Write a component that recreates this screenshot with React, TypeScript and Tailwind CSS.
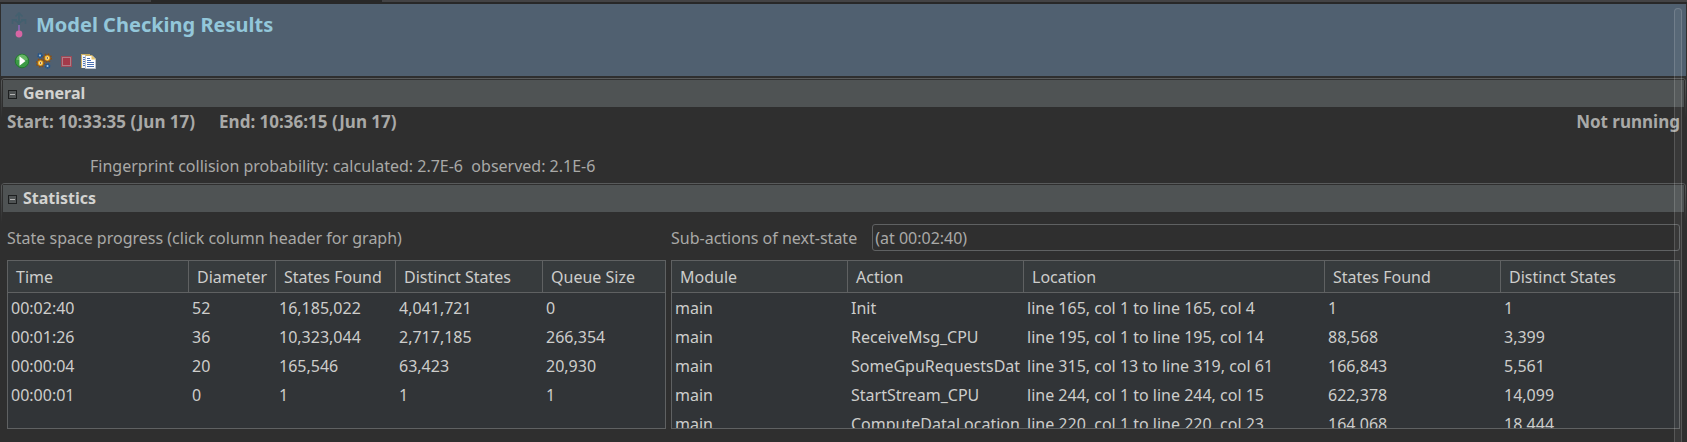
import React from "react";

type Column = { label: string; width: string };

const progressColumns: Column[] = [
  { label: "Time", width: "w-[181px]" },
  { label: "Diameter", width: "w-[87px]" },
  { label: "States Found", width: "w-[120px]" },
  { label: "Distinct States", width: "w-[147px]" },
  { label: "Queue Size", width: "w-auto" },
];

const progressRows = [
  ["00:02:40", "52", "16,185,022", "4,041,721", "0"],
  ["00:01:26", "36", "10,323,044", "2,717,185", "266,354"],
  ["00:00:04", "20", "165,546", "63,423", "20,930"],
  ["00:00:01", "0", "1", "1", "1"],
];

const actionColumns: Column[] = [
  { label: "Module", width: "w-[176px]" },
  { label: "Action", width: "w-[176px]" },
  { label: "Location", width: "w-[301px]" },
  { label: "States Found", width: "w-[176px]" },
  { label: "Distinct States", width: "w-auto" },
];

const actionRows = [
  ["main", "Init", "line 165, col 1 to line 165, col 4", "1", "1"],
  ["main", "ReceiveMsg_CPU", "line 195, col 1 to line 195, col 14", "88,568", "3,399"],
  ["main", "SomeGpuRequestsDat", "line 315, col 13 to line 319, col 61", "166,843", "5,561"],
  ["main", "StartStream_CPU", "line 244, col 1 to line 244, col 15", "622,378", "14,099"],
  ["main", "ComputeDataLocation", "line 220, col 1 to line 220, col 23", "164,068", "18,444"],
];

function DataTable({ label, columns, rows }: { label: string; columns: Column[]; rows: string[][] }) {
  return (
    <div className="min-h-0 flex-1 overflow-hidden border border-[#5f6162] bg-[#313437]">
      <table
        aria-label={label}
        className="w-full table-fixed border-separate border-spacing-0 text-left text-[#cdcdcb]"
      >
        <thead>
          <tr className="h-8 bg-[#373b3d]">
            {columns.map((c) => (
              <th
                key={c.label}
                className={`${c.width} border-r border-b border-[#5f6162] p-0 font-normal last:border-r-0`}
              >
                <button type="button" className="block w-full truncate pl-2 text-left leading-6">
                  {c.label}
                </button>
              </th>
            ))}
          </tr>
        </thead>
        <tbody>
          {rows.map((row) => (
            <tr key={row.join()} className="h-[29px]">
              {row.map((cell, i) => (
                <td key={i} className="overflow-hidden p-0 pl-[3px] leading-6 whitespace-nowrap">
                  <div className="overflow-hidden">{cell}</div>
                </td>
              ))}
            </tr>
          ))}
        </tbody>
      </table>
    </div>
  );
}

function Section({ title, className, children }: { title: string; className: string; children: React.ReactNode }) {
  return (
    <section className={`rounded-t-sm bg-[linear-gradient(#595b5c,#2f2f2f_40px)] px-px pt-px ${className}`}>
      <div className="flex min-h-0 flex-1 flex-col rounded-t-xs bg-[#2f2f2f] pt-px">
        <h2 className="mx-px h-[27px] shrink-0 bg-[#4f5354] font-bold text-[#d3d3d1]">
          <button type="button" className="flex h-full w-full items-center gap-[6px] pb-[2px] pl-[5px] text-left">
            <svg aria-hidden="true" viewBox="0 0 9 9" className="mt-1 size-[9px]" shapeRendering="crispEdges">
              <rect x="0.5" y="0.5" width="8" height="8" fill="none" stroke="#1d1f20" />
              <rect x="2" y="4" width="5" height="1" fill="#b5b5b5" />
            </svg>
            {title}
          </button>
        </h2>
        {children}
      </div>
    </section>
  );
}

function ModelIcon() {
  return (
    <svg aria-hidden="true" viewBox="0 0 16 26" className="h-[26px] w-4" fill="none">
      <path
        d="M8 14V1.500M4.500 4.500 8 1l3.500 3.500M8 14C8 11 5.500 8.500 1.500 8M1.500 12V7.700H6M8 14c0-3 2.500-5.500 6.500-6M14.500 12V7.700H10"
        stroke="#43606f"
        strokeWidth="1.600"
      />
      <path d="M8 13v7" stroke="#8066a8" strokeWidth="2" />
      <circle cx="8" cy="22" r="3.400" fill="#d765a3" />
    </svg>
  );
}

function RunIcon() {
  return (
    <svg aria-hidden="true" viewBox="0 0 16 16" className="size-4">
      <circle cx="8" cy="8" r="6.800" fill="#3c9a45" stroke="#21782f" />
      <path d="M2.500 7a5.500 5.500 0 0 1 11 0Z" fill="#67b565" />
      <path d="M5.500 3.300v9.400L11.500 8Z" fill="#fff" />
    </svg>
  );
}

function Gear({ cx, cy }: { cx: number; cy: number }) {
  return (
    <g>
      <circle cx={cx} cy={cy} r="3.900" stroke="#8a4f12" strokeWidth="1.600" strokeDasharray="1.530 1.530" />
      <circle cx={cx} cy={cy} r="3.100" fill="#f7b92e" stroke="#8a4f12" strokeWidth="0.700" />
      <circle cx={cx} cy={cy} r="1.500" fill="#fff4d0" />
      <circle cx={cx} cy={cy} r="0.800" fill="#4a2c10" />
    </g>
  );
}

function GearsIcon() {
  return (
    <svg aria-hidden="true" viewBox="0 0 16 16" className="size-4 overflow-visible" fill="none">
      <circle cx="4" cy="2.500" r="2" stroke="#1b5494" strokeWidth="1.600" strokeDasharray="1.500 0.600" />
      <circle cx="4" cy="2.500" r="1" fill="#9ccbf0" />
      <circle cx="11.500" cy="13" r="2" stroke="#1b5494" strokeWidth="1.600" strokeDasharray="1.500 0.600" />
      <circle cx="11.500" cy="13" r="1" fill="#9ccbf0" />
      <Gear cx={11.3} cy={5} />
      <Gear cx={4.5} cy={10} />
    </svg>
  );
}

function StopIcon() {
  return (
    <svg aria-hidden="true" viewBox="0 0 16 16" className="size-4">
      <rect x="3" y="3" width="11" height="11" fill="#9b4a58" />
      <rect x="4.500" y="4.500" width="8" height="8" fill="#a33a4a" stroke="#b07c86" />
    </svg>
  );
}

function CopyIcon() {
  return (
    <svg aria-hidden="true" viewBox="0 0 16 16" className="size-4">
      <path d="M1 1h9v14H1z" fill="#eef1f7" />
      <path d="M1 1.500h9M1.500 1v14" stroke="#c9ae62" />
      <path d="M3 4.500h2M3 6.500h2M3 8.500h2M3 10.500h2M3 12.500h2" stroke="#5278b8" />
      <path d="M5.500 2.500h6.500l3.500 3.500v9.500h-10z" fill="#fff" stroke="#b9c0cc" />
      <path d="M5.500 2.500H12" stroke="#c9ae62" />
      <path d="M11.500 2v4.500H16z" fill="#e5c46c" />
      <path d="M7 5.500h3M7 7.500h4M7 9.500h7M7 11.500h7M7 13.500h7" stroke="#4a70b2" />
    </svg>
  );
}

const tools = [
  { label: "Run model", icon: <RunIcon /> },
  { label: "Check model", icon: <GearsIcon /> },
  { label: "Stop", icon: <StopIcon /> },
  { label: "Copy results", icon: <CopyIcon /> },
];

export default function App() {
  return (
    <div className="relative flex h-screen flex-col overflow-hidden bg-[#2f2f2f] font-['Noto_Sans',sans-serif] text-base text-[#a9a9a7]">
      <div className="flex h-1 shrink-0 bg-[#282828] pb-[2px]">
        <div className="w-[151px] bg-[#434345]" />
        <div className="w-[231px]" />
        <div className="flex-1 bg-[#434345]" />
      </div>

      <header className="mx-px flex h-[72px] shrink-0 flex-col bg-[#506070] pl-[10px]">
        <div className="flex h-[42px] items-center gap-[9px]">
          <ModelIcon />
          <h1 className="text-xl font-bold text-[#93c7da]">Model Checking Results</h1>
        </div>
        <div className="flex h-[30px] gap-[6px] pt-[7px] pl-[3px]">
          {tools.map((t) => (
            <button key={t.label} type="button" aria-label={t.label} className="size-4">
              {t.icon}
            </button>
          ))}
        </div>
      </header>

      <main className="mx-px flex min-h-0 flex-1 flex-col pt-[2px]">
        <Section title="General" className="flex h-[105px] shrink-0 flex-col">
          <div className="flex justify-between pt-[3px] pr-[5px] pl-[5px] text-[17px] leading-6 font-bold">
            <div className="flex gap-6">
              <span>Start: 10:33:35 (Jun 17)</span>
              <span>End: 10:36:15 (Jun 17)</span>
            </div>
            <span>Not running</span>
          </div>
          <p className="pt-5 pl-[88px] leading-6 whitespace-pre">
            Fingerprint collision probability: calculated: 2.7E-6{"  "}observed: 2.1E-6
          </p>
        </Section>

        <Section title="Statistics" className="flex min-h-0 flex-1 flex-col">
          <div className="grid min-h-0 flex-1 grid-cols-[659fr_1009fr] gap-[5px] px-[5px] pt-3 pb-[13px]">
            <div className="flex min-h-0 min-w-0 flex-col">
              <p className="mb-2 leading-7">State space progress (click column header for graph)</p>
              <DataTable label="State space progress" columns={progressColumns} rows={progressRows} />
            </div>
            <div className="flex min-h-0 min-w-0 flex-col">
              <div className="mb-2 flex items-start gap-[15px]">
                <label htmlFor="snapshot" className="leading-7">
                  Sub-actions of next-state
                </label>
                <input
                  id="snapshot"
                  readOnly
                  value="(at 00:02:40)"
                  className="h-[27px] min-w-0 flex-1 rounded-[3px] border border-[#5f6162] bg-transparent px-[2px] outline-none"
                />
              </div>
              <DataTable label="Sub-actions of next-state" columns={actionColumns} rows={actionRows} />
            </div>
          </div>
        </Section>
      </main>

      <div
        aria-hidden="true"
        className="pointer-events-none absolute top-2 right-[5px] bottom-0 w-2 rounded-t-full border border-b-0 border-white/15 bg-white/5"
      />
    </div>
  );
}
